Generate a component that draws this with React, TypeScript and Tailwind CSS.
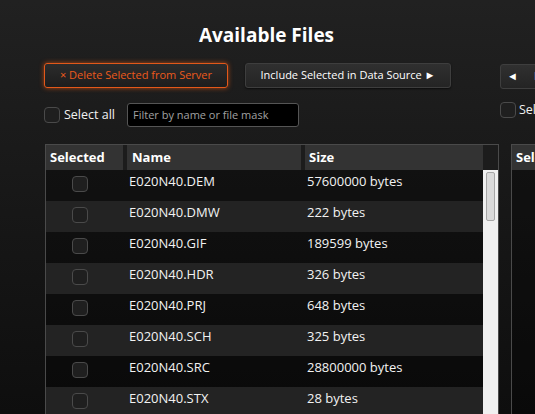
import React from "react"

interface FileItem {
  name: string
  size: string
}

const files: FileItem[] = [
  { name: "E020N40.DEM", size: "57600000 bytes" },
  { name: "E020N40.DMW", size: "222 bytes" },
  { name: "E020N40.GIF", size: "189599 bytes" },
  { name: "E020N40.HDR", size: "326 bytes" },
  { name: "E020N40.PRJ", size: "648 bytes" },
  { name: "E020N40.SCH", size: "325 bytes" },
  { name: "E020N40.SRC", size: "28800000 bytes" },
  { name: "E020N40.STX", size: "28 bytes" },
]

function Check({ className = "" }: { className?: string }) {
  return (
    <span
      className={`block w-[16px] h-[16px] rounded-[4px] border border-[#4a4a4a] bg-[#1f1f1f] ${className}`}
    />
  )
}

export default function App() {
  return (
    <div
      className="h-[414px] w-[535px] overflow-hidden bg-gradient-to-b from-[#212121] to-[#0e0e0e] text-[#f0f0f0]"
      style={{ fontFamily: '"Open Sans", "Noto Sans", sans-serif' }}
    >
      <div className="flex pl-[44px]">
        {/* left panel */}
        <div className="w-[455px] shrink-0 flex flex-col">
          <h1 className="pt-[21px] h-[63px] text-center text-[19px] font-bold text-white pr-[10px]">
            Available Files
          </h1>

          <div className="flex gap-[17px]">
            <button className="w-[184px] h-[25px] rounded-[3px] border border-[#e3581a] bg-gradient-to-b from-[#2c2c2c] to-[#1d1d1d] text-[11px] text-[#ec5a1c] shadow-[0_0_5px_rgba(230,90,20,0.7)]">
              × Delete Selected from Server
            </button>
            <button className="w-[206px] h-[25px] rounded-[3px] border border-[#3e3e3e] bg-gradient-to-b from-[#303030] to-[#242424] text-[11px] text-white shadow-[0_1px_2px_rgba(0,0,0,0.6)]">
              Include Selected in Data Source ►
            </button>
          </div>

          <div className="flex items-center mt-[15px] h-[24px]">
            <Check className="w-[15px] h-[15px]" />
            <span className="ml-[4px] text-[12.5px]">Select all</span>
            <div className="ml-[12px] w-[172px] h-[24px] rounded-[3px] border border-[#555] bg-black flex items-center px-[5px] text-[11px] text-[#a0a0a0]">
              Filter by name or file mask
            </div>
          </div>

          {/* grid */}
          <div className="mt-[17px] ml-[1px] border-l border-r border-t border-[#4a4a4a] w-[454px]">
            <div className="flex h-[25px] bg-[#1c1c1c] text-[13px] font-bold text-white">
              <div className="w-[77px] bg-[#333] pl-[4px] flex items-center">Selected</div>
              <div className="w-[174px] ml-[4px] bg-[#333] pl-[5px] flex items-center">Name</div>
              <div className="w-[178px] ml-[4px] bg-[#333] pl-[4px] flex items-center">Size</div>
              <div className="w-[15px]" />
            </div>
            <div className="flex">
              <div className="w-[437px]">
                {files.map((f, i) => (
                  <div
                    key={f.name}
                    className={`flex h-[31px] text-[13px] text-[#f2f2f2] ${
                      i % 2 === 0 ? "bg-black/30" : "bg-[#232323]"
                    }`}
                  >
                    <div className="w-[81px] pl-[26px] pt-[6px]">
                      <Check />
                    </div>
                    <div className="w-[178px] pl-[2px] pt-[2px]">{f.name}</div>
                    <div className="w-[178px] pl-[2px] pt-[2px]">{f.size}</div>
                  </div>
                ))}
              </div>
              <div className="w-[15px] bg-[#f0f0f0] pt-[2px] px-[3px]">
                <div className="h-[49px] rounded-[2px] border border-[#a6a6a6] bg-[#dadada]" />
              </div>
            </div>
          </div>
        </div>

        {/* right panel, clipped by the window */}
        <div className="ml-[1px] w-[300px] shrink-0 flex flex-col">
          <div className="h-[64px]" />
          <button className="w-[220px] h-[25px] whitespace-nowrap overflow-hidden rounded-[3px] border border-[#3e3e3e] bg-gradient-to-b from-[#303030] to-[#242424] text-[11px] text-white text-left pl-[6px]">
            ◄<span className="ml-[16px]">Remove Selected from Data Source</span>
          </button>
          <div className="flex items-center mt-[13px] h-[16px]">
            <Check className="w-[15px] h-[15px]" />
            <span className="ml-[3px] text-[12.5px] whitespace-nowrap">Select all</span>
          </div>
          <div className="mt-[26px] ml-[11px] border-l border-t border-[#4a4a4a] h-[300px] flex flex-col">
            <div className="h-[25px] bg-[#333] pl-[4px] flex items-center text-[13px] font-bold text-white">
              Selected
            </div>
            <div className="flex-1 bg-black/30" />
          </div>
        </div>
      </div>
    </div>
  )
}
